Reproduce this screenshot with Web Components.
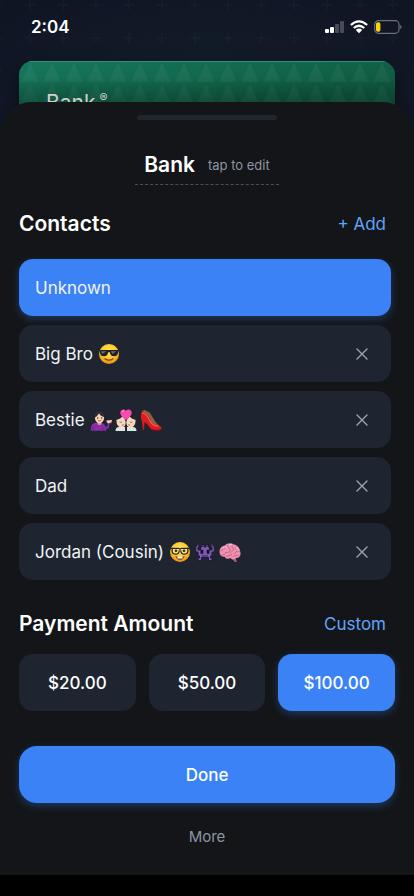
<!DOCTYPE html>
<html lang="en">
<head>
<meta charset="utf-8">
<meta name="viewport" content="width=device-width, initial-scale=1">
<title>Bank</title>
<style>
:root{--sheet:#131518;--tile:#1e2530;--blue:#3b82f6;--link:#60a5fa;--muted:#8d95a3;--glow:0 3px 9px rgba(59,130,246,.32)}
body{margin:0;background:#000;font-family:Inter,"Liberation Sans",sans-serif;color:#fff}
</style>
</head>
<body>
<payment-screen></payment-screen>
<script>
const define=(name,html,setup)=>{
  const t=document.createElement('template');
  t.innerHTML=html;
  customElements.define(name,class extends HTMLElement{
    constructor(){super();this.attachShadow({mode:'open'}).append(t.content.cloneNode(true));}
    connectedCallback(){if(setup)setup(this,this.shadowRoot);}
  });
};
const faceGold='<defs><radialGradient id="g" cx=".5" cy=".35" r=".65"><stop offset="0" stop-color="#ffe75a"/><stop offset=".6" stop-color="#fcc62f"/><stop offset="1" stop-color="#e98b12"/></radialGradient></defs><circle cx="11" cy="11" r="10" fill="url(#g)"/>';
const EMOJI={
  sunglasses:faceGold+'<path d="M1.4 7h19.2l-.5 2.2c-.4 3-1.7 4-4.2 4-2.6 0-3.5-1.6-4.1-4h-1.6c-.6 2.4-1.5 4-4.1 4-2.5 0-3.8-1-4.2-4z" fill="#202124"/><path d="M3 8.3h5.5L4.2 11zM13 8.3h5.5L14.2 11z" fill="#66706f"/><path d="M7 15.8q4 2.8 8 0" fill="none" stroke="#7b3b09" stroke-width="1.3" stroke-linecap="round"/>',
  nerd:faceGold+'<circle cx="6.8" cy="9.5" r="3.5" fill="#ffe98a"/><circle cx="15.2" cy="9.5" r="3.5" fill="#ffe98a"/><path d="M1.3 7.3h8.2l1.5 1 1.5-1h8.2M3.2 7.5v3q.4 2.7 3.5 2.7 3.3 0 3.6-4M18.8 7.5v3q-.4 2.7-3.5 2.7-3.3 0-3.6-4" fill="none" stroke="#242322" stroke-width="1.2"/><circle cx="7" cy="9.8" r="1.4" fill="#4b2b13"/><circle cx="15" cy="9.8" r="1.4" fill="#4b2b13"/><path d="M6.3 15q4.7 2 9.4 0-1.4 4-4.7 4t-4.7-4z" fill="#854713"/><path d="M8.5 15.5h5v2h-5z" fill="#fff"/>',
  tipping:'<path d="M4.5 14C1.6 8 3.2 1 9.5.7c6-.2 7.5 5.7 5.2 12.3z" fill="#24232a"/><path d="M.8 21.7c-.2-6 2-8.2 7.5-8.2 5 0 7.4 2 8 8.2z" fill="#8b2da5"/><path d="M13.4 18.5l4-1.3.8-4.6h3.4l.2 1.3-2.3.8-.7 4.4-5.4 2.2z" fill="#8b2da5"/><path d="M16.2 11.6l5.8-.5-.5 2.2-3.8 1.3z" fill="#f2d0b2"/><path d="M7.5 12h4v3.3q-2 1.5-4 0z" fill="#d7a786"/><ellipse cx="9.5" cy="8.8" rx="4.6" ry="5.3" fill="#f4d5bc"/><path d="M4.7 8.7Q4.2 2.8 9 2.6c4 .1 5.4 3 5.1 5.5Q10.7 7.5 8.8 4.6 7.6 7.3 4.7 8.7z" fill="#302d34"/><circle cx="7.7" cy="9" r=".7" fill="#38221c"/><circle cx="11.6" cy="9" r=".7" fill="#38221c"/><path d="M8 11.5q1.6 1 3.3 0" stroke="#be5660" fill="none"/><path d="M3 18v3.7M13 18v3.7" stroke="#6d2286"/>',
  couple:'<path d="M0 20V9Q.6 3.5 6 4.2 10.7 4.5 10.8 10v10zM11.2 20V10q.3-5.7 5-5.8Q21.6 3.7 22 9v11z" fill="#25242a"/><path d="M.5 22q0-4 3.8-4H10v4zM12 22v-4h5.7q3.8 0 3.8 4z" fill="#dce6e3"/><path d="M1.4 11Q6 9.5 7.4 7.5q2.7 2 3.4 5.8-.6 5.5-4.8 5.5Q1.4 17.6 1.4 11zM20.6 11q-4.6-1.5-6-3.5-2.7 2-3.4 5.8.6 5.5 4.8 5.5 4.6-1.2 4.6-7.8z" fill="#f5d7c0"/><path d="M4.6 13q1.3.8 2.4 0M15 13q1.3.8 2.4 0M7 16.3l1.8-.5M13.2 15.8l1.8.5" fill="none" stroke="#85483c" stroke-width=".8"/><path d="M11 11C7 8 5 5.9 5.3 3.2 5.8.1 9.8-.4 11 2c1.2-2.4 5.2-1.9 5.7 1.2.3 2.7-1.7 4.8-5.7 7.8z" fill="#f64baf"/><path d="M7 3.2q.5-1.6 2.1-1.3" stroke="#ff9fd5" fill="none"/>',
  heel:'<path d="M1.6 3.6C.3 8 1.2 10.2 2 12.5l.9 8.2h1.2l.3-7.1c3.8.8 4.9 6.6 8.4 7.4 3 .7 6.9.5 8.5-.6.7-1.8-.8-3.6-3.2-4.6-3.1.1-5.8-1.3-7.4-4.5L4.3.7Q2.4.8 1.6 3.6z" fill="#d91e22"/><path d="M4.2.8l5.6 2.9 5.8 9.4 2.7 2.8q-4.4.4-7-2.6Q8.7 5.2 3.2 2.8z" fill="#93603f"/><path d="M1.9 4q4.8.6 7.3 6.6 3 7 9.4 6.6" stroke="#ff5a4f" stroke-width="1.2" fill="none"/><path d="M4.5 13.7c3.8.8 4.9 6.6 8.4 7.2 3 .6 6.9.4 8.4-.6" stroke="#8e0c15" fill="none"/>',
  monster:'<path d="M3 3h2v3H4v3h2.5V6H8V3.5h2V6h2V3.5h2V6h1.5v3H18V6h-1V3h2v2h1.3v6H18v4h-1.5v2H18v2.5h-3.5v-3h-7v3H4V17h1.5v-2H4v-4H1.7V5H3z" fill="#7e5bb7" stroke="#201930" stroke-width="1"/><path d="M6.5 8.8h2.8v4H6.5zM12.7 8.8h2.8v4h-2.8z" fill="#17131f"/><path d="M8 14.2h6v1.4H8z" fill="#49317a"/>',
  brain:'<path d="M11.5 17.5l5-1.2 1.3 4.4q-2 .8-2.8-1z" fill="#bd5977"/><path d="M.8 12.6C-.3 8.7 2 5 5.8 4.5 8.2 1.9 12.2 1.7 15 3.5c3.7.7 6 3.9 6.2 7.1 1.2 3.8-.8 6.6-4.3 6.3-1.4 1.8-4.2 1.5-5.5.2-2.7 1.5-5.2.3-5.6-1.4-2.7.4-4.6-.8-5-3.1z" fill="#ed92ae"/><path d="M2.2 10c1.4-3 4.1-1.1 4-3.7M3.2 13.8c1.8.5 3.4-.5 3.5-2.5 3 .8 5-1.2 4.3-3.4M8 4.3c-.5 2 2.7 1.1 2.6 3M13.5 4c-2 2.6 1.8 2.6.6 5.1-.7 1.5-2.2 1.6-3 2.6M17.6 5.2c-2.3 1-1.3 2.5-.1 3.2M20.5 10.3c-2-.8-4 0-4.5 2.2M7.3 15.3c1.6-1.2 4.5-.1 5.6-1.7M14.3 15.2c2 .2 3.6-1.6 5.2-.8" stroke="#c2608a" stroke-width=".9" fill="none" stroke-linecap="round"/><path d="M4 7.2q1.5-1.8 3.7-1.2M10 4q2-.9 3.2-.2M16.7 6.5q2.5.8 2.7 3" stroke="#ffc0ce" fill="none"/>'
};

define('emoji-icon',`<style>:host{display:block;width:22px;height:22px}svg{display:block;width:100%;height:100%}</style><svg viewBox="0 0 22 22" role="img"></svg>`,
(h,r)=>{const s=r.querySelector('svg');s.innerHTML=EMOJI[h.getAttribute('name')];s.setAttribute('aria-label',h.getAttribute('name'));});

define('status-bar',`<style>
:host{display:flex;justify-content:space-between;align-items:center;padding:16px 12px 0 31px;height:22px;position:relative}
time{font-size:17px;font-weight:600;line-height:22px}
div{display:flex;align-items:center;gap:6px}svg{display:block}</style>
<time>2:04</time><div>
<svg width="19" height="14" viewBox="0 0 19 14"><g fill="#fff"><rect x="0" y="9" width="4" height="4" rx="1"/><rect x="5" y="7" width="4" height="6" rx="1"/></g><g fill="#464c58"><rect x="10" y="4" width="4" height="9" rx="1"/><rect x="15" y="1" width="4" height="12" rx="1"/></g></svg>
<svg width="18" height="14" viewBox="0 0 18 14"><g fill="none" stroke="#fff" stroke-width="2.3"><path d="M.9 5Q9-2.3 17.1 5"/><path d="M3.8 8Q9 3.4 14.2 8"/></g><path d="M5.8 10Q9 7.2 12.2 10L9 13.3z" fill="#fff"/></svg>
<svg width="28" height="14" viewBox="0 0 28 14"><rect x=".7" y=".7" width="24.3" height="12.6" rx="3.8" fill="none" stroke="#6b7079" stroke-width="1.2"/><rect x="2" y="2.3" width="4.4" height="9.4" rx="1.8" fill="#fed20a"/><path d="M26.2 5v4q1.4-.6 1.4-2t-1.4-2z" fill="#6b7079"/></svg>
</div>`);

define('bank-card',`<style>
:host{display:block;position:relative;margin:23px 19px 0;height:73px;border-radius:14px 14px 0 0;overflow:hidden;background:linear-gradient(170deg,#16785e 0%,#11654a 40%,#0f5940 65%);box-shadow:0 8px 20px #0007}
svg{position:absolute;inset:0;width:100%;height:100%}
.shade{position:absolute;inset:0;background:linear-gradient(transparent 20%,#0004 60%);border-top:1px solid #3b8e75}
p{position:relative;margin:0;padding:29px 27px 0;font-size:21px;line-height:26px;font-weight:400;color:#cfd0cc}
sup{font-size:12px;line-height:0;margin-left:4px}</style>
<svg aria-hidden="true"><defs><pattern id="t" width="22" height="21" patternUnits="userSpaceOnUse"><path d="M11 2l9 19H2z" fill="#fff" opacity=".045"/></pattern></defs><rect width="100%" height="100%" fill="url(#t)"/></svg><div class="shade"></div><p><slot></slot><sup>®</sup></p>`);

define('bottom-sheet',`<style>
:host{display:block;position:relative;background:var(--sheet);border-radius:32px 32px 0 0;padding:13px 19px 26px}
.grab{width:140px;height:5px;border-radius:3px;background:#20262d;margin:0 auto}</style><div class="grab"></div><slot></slot>`);

define('sheet-title',`<style>
:host{display:flex;justify-content:center;margin-top:26px}
button{all:unset;cursor:pointer;display:flex;align-items:center;gap:13px;padding:4px 9px;line-height:30px;border-bottom:1px dashed #4a505b;font-size:21px;font-weight:600;color:#fff;height:30px}
small{font-size:13px;font-weight:400;color:var(--muted)}</style><button type="button"><slot></slot><small>tap to edit</small></button>`);

define('section-head',`<style>
:host{display:flex;justify-content:space-between;align-items:center;height:30px;padding-right:9px}
h2{margin:0;font-size:21px;line-height:30px;font-weight:600}
button{all:unset;cursor:pointer;font-size:17px;line-height:30px;color:var(--link)}</style><h2><slot></slot></h2><button type="button"></button>`,
(h,r)=>{r.querySelector('button').textContent=h.getAttribute('action');});

define('contact-row',`<style>
:host{display:flex;height:57px;border-radius:14px;background:var(--tile)}
:host([selected]){background:var(--blue);box-shadow:var(--glow)}
button{all:unset;cursor:pointer;box-sizing:border-box}
.pick{flex:1;display:flex;align-items:center;gap:5px;padding-left:16px;font-size:17px;line-height:24px;color:#f1f3f6}
.emo{display:flex;gap:3px}
.x{width:58px;display:grid;place-items:center}
:host([selected]) .x{display:none}</style>
<button type="button" class="pick"><span><slot></slot></span><span class="emo"><slot name="emoji"></slot></span></button>
<button type="button" class="x" aria-label="Remove contact"><svg width="12" height="12" viewBox="0 0 12 12" aria-hidden="true"><path d="M1 1l10 10M11 1L1 11" stroke="#9ca3af" stroke-width="1.4" stroke-linecap="round"/></svg></button>`);

define('contact-list',`<style>:host{display:grid;gap:9px;padding-right:4px}</style><slot></slot>`);
define('amount-grid',`<style>:host{display:grid;grid-template-columns:repeat(3,1fr);gap:13px}</style><slot></slot>`);
define('action-button',`<style>
:host{display:block}
button{all:unset;box-sizing:border-box;cursor:pointer;width:100%;height:57px;border-radius:14px;background:var(--tile);text-align:center;font-size:17px;line-height:24px;font-weight:500;color:#fff}
:host([primary]) button{background:var(--blue);box-shadow:var(--glow)}
:host([large]) button{border-radius:18px}
:host([plain]) button{background:none;height:24px;font-size:15px;font-weight:400;color:var(--muted)}</style><button type="button"><slot></slot></button>`);

define('payment-screen',`<style>
:host{display:block;min-height:100vh;box-sizing:border-box;padding-bottom:21px;background:#000}
.back{position:relative;background:radial-gradient(ellipse at 50% 60%,#131d2a,#101524 90%);height:134px;margin-bottom:-32px}
.back>svg{position:absolute;inset:0;width:100%;height:100%}
.first{margin-top:24px;margin-bottom:20px}.second{margin-top:29px;margin-bottom:15px}
.done{margin-top:35px}.more{margin-top:22px}</style>
<div class="back"><svg aria-hidden="true"><defs><pattern id="p" x="14" y="-11" width="33" height="33" patternUnits="userSpaceOnUse"><path d="M16 11v10M11 16h10" stroke="#fff" stroke-width="2" opacity=".018"/></pattern></defs><rect width="100%" height="100%" fill="url(#p)"/></svg>
<status-bar></status-bar><bank-card>Bank</bank-card></div>
<bottom-sheet>
<sheet-title>Bank</sheet-title>
<section-head class="first" action="+ Add">Contacts</section-head>
<contact-list>
<contact-row selected>Unknown</contact-row>
<contact-row>Big Bro<emoji-icon slot="emoji" name="sunglasses"></emoji-icon></contact-row>
<contact-row>Bestie<emoji-icon slot="emoji" name="tipping"></emoji-icon><emoji-icon slot="emoji" name="couple"></emoji-icon><emoji-icon slot="emoji" name="heel"></emoji-icon></contact-row>
<contact-row>Dad</contact-row>
<contact-row>Jordan (Cousin)<emoji-icon slot="emoji" name="nerd"></emoji-icon><emoji-icon slot="emoji" name="monster"></emoji-icon><emoji-icon slot="emoji" name="brain"></emoji-icon></contact-row>
</contact-list>
<section-head class="second" action="Custom">Payment Amount</section-head>
<amount-grid><action-button>$20.00</action-button><action-button>$50.00</action-button><action-button primary>$100.00</action-button></amount-grid>
<action-button class="done" primary large>Done</action-button>
<action-button class="more" plain>More</action-button>
</bottom-sheet>`);
</script>
</body>
</html>
